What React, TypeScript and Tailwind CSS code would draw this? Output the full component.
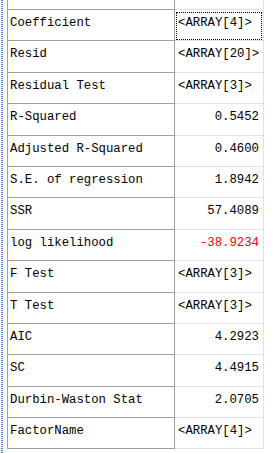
const rows: { label: string; value: string; kind: "array" | "num" | "neg" }[] = [
  { label: "Coefficient", value: "<ARRAY[4]>", kind: "array" },
  { label: "Resid", value: "<ARRAY[20]>", kind: "array" },
  { label: "Residual Test", value: "<ARRAY[3]>", kind: "array" },
  { label: "R-Squared", value: "0.5452", kind: "num" },
  { label: "Adjusted R-Squared", value: "0.4600", kind: "num" },
  { label: "S.E. of regression", value: "1.8942", kind: "num" },
  { label: "SSR", value: "57.4089", kind: "num" },
  { label: "log likelihood", value: "-38.9234", kind: "neg" },
  { label: "F Test", value: "<ARRAY[3]>", kind: "array" },
  { label: "T Test", value: "<ARRAY[3]>", kind: "array" },
  { label: "AIC", value: "4.2923", kind: "num" },
  { label: "SC", value: "4.4915", kind: "num" },
  { label: "Durbin-Waston Stat", value: "2.0705", kind: "num" },
  { label: "FactorName", value: "<ARRAY[4]>", kind: "array" },
];

export default function App() {
  return (
    <div className="flex h-[453px] w-[276px] overflow-hidden bg-white font-['Liberation_Mono',monospace] text-[12.3px] leading-none text-black">
      {/* focus strip */}
      <div className="w-[7px] shrink-0">
        <div className="ml-[1px] h-full w-[2px] bg-[repeating-linear-gradient(to_bottom,#3b82d6_0_1px,transparent_1px_2px)]" />
      </div>

      <div className="flex flex-col">
        <div className="flex h-[10px]">
          <div className="w-[168px] border-x border-b border-[#a0a0a0]" />
          <div className="w-[89px] border-r border-b border-[#e2e2e2]" />
        </div>
        {rows.map((r, i) => (
          <div key={r.label} className="flex h-[31.4px]">
            <div className="w-[168px] border-x border-b border-[#a0a0a0] pl-[2px] pt-[7px] whitespace-pre">
              {r.label}
            </div>
            <div
              className={
                "relative w-[89px] border-r border-b border-[#e2e2e2] pt-[7px] whitespace-pre " +
                (r.kind === "array" ? "pl-[3px] text-left" : "pr-[4px] text-right") +
                (r.kind === "neg" ? " text-[#ff0000]" : "")
              }
            >
              {r.value}
              {i === 0 && (
                <div className="absolute inset-x-[1px] top-[2px] bottom-0 border border-dotted border-black" />
              )}
            </div>
          </div>
        ))}
      </div>
    </div>
  );
}
